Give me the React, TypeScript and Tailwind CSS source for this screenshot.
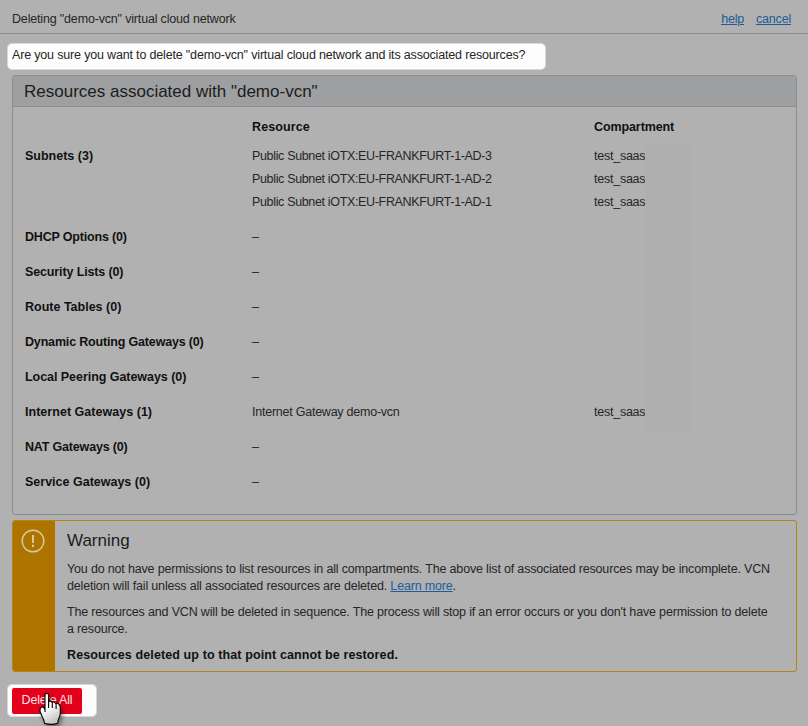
import React from "react";

type Entry = { resource: string; compartment: string };
type Group = { label: string; spacing: string; entries: Entry[] };

const groups: Group[] = [
  {
    label: "Subnets (3)",
    spacing: "tracking-[0px]",
    entries: [
      { resource: "Public Subnet iOTX:EU-FRANKFURT-1-AD-3", compartment: "test_saas" },
      { resource: "Public Subnet iOTX:EU-FRANKFURT-1-AD-2", compartment: "test_saas" },
      { resource: "Public Subnet iOTX:EU-FRANKFURT-1-AD-1", compartment: "test_saas" },
    ],
  },
  { label: "DHCP Options (0)", spacing: "tracking-[-0.18px]", entries: [] },
  { label: "Security Lists (0)", spacing: "tracking-[-0.13px]", entries: [] },
  { label: "Route Tables (0)", spacing: "tracking-[0px]", entries: [] },
  { label: "Dynamic Routing Gateways (0)", spacing: "tracking-[-0.17px]", entries: [] },
  { label: "Local Peering Gateways (0)", spacing: "tracking-[-0.05px]", entries: [] },
  {
    label: "Internet Gateways (1)",
    spacing: "tracking-[0.03px]",
    entries: [{ resource: "Internet Gateway demo-vcn", compartment: "test_saas" }],
  },
  { label: "NAT Gateways (0)", spacing: "tracking-[-0.18px]", entries: [] },
  { label: "Service Gateways (0)", spacing: "tracking-[0px]", entries: [] },
];

function GroupRow({ group }: { group: Group }) {
  const entries = group.entries.length ? group.entries : [{ resource: "–", compartment: "" }];
  const resourceSpacing = entries.length > 1 ? "tracking-[-0.34px]" : "tracking-[-0.24px]";
  return (
    <div className="flex pb-3">
      <div className={`w-[227px] font-bold leading-[23px] text-[#111111] ${group.spacing}`}>{group.label}</div>
      <div className="flex-1">
        {entries.map((entry) => (
          <div key={entry.resource} className="flex h-[23px] leading-[23px]">
            <div className={`w-[342px] ${resourceSpacing}`}>{entry.resource}</div>
            <div className="tracking-[-0.24px]">{entry.compartment}</div>
          </div>
        ))}
      </div>
    </div>
  );
}

function HandCursor() {
  return (
    <svg
      className="absolute left-[31px] top-[6px] drop-shadow-[2px_3px_2px_rgba(0,0,0,0.4)]"
      width="24"
      height="36"
      viewBox="0 0 24 36"
    >
      <defs>
        <linearGradient id="hand" x1="0" y1="0" x2="0.4" y2="1">
          <stop offset="0.5" stopColor="#ffffff" />
          <stop offset="1" stopColor="#c8c8c8" />
        </linearGradient>
      </defs>
      <path
        d="M6 18.5V4.2Q6 2.4 7.8 2.4T9.6 4.2V10.6Q11.5 9.4 13 11.3Q15 10.4 16.7 12.4Q19 11.7 20 13.4Q21.5 14.5 21.3 17.5V22Q21.3 25 19.8 27.5Q18.8 29.5 18.8 32.2Q12 34.5 5.5 32.2Q5.2 29 3 25.3L1.3 21Q0.4 17.5 2.2 16.2Q4.5 15 6 18.5Z"
        fill="url(#hand)"
        stroke="#000000"
        strokeWidth="1.1"
        strokeLinejoin="round"
      />
      <path d="M9.6 10.5V17M13.3 11.5V17M17.1 12.5V18M6 18.5V21" stroke="#000000" strokeWidth="1.1" fill="none" />
    </svg>
  );
}

export default function App() {
  return (
    <div className="h-[726px] w-[808px] overflow-hidden bg-[#b1b1b1] font-['Liberation_Sans',Arial,sans-serif] text-[12.5px] leading-[17px] tracking-[-0.17px] text-[#262626]">
      <header className="flex h-[34px] items-center justify-between border-b border-[#8d8e92] pl-3 pr-[17px] pt-[5px]">
        <div>Deleting "demo-vcn" virtual cloud network</div>
        <nav className="flex gap-3 tracking-[-0.2px] text-[#205b99] underline">
          <a>help</a>
          <a>cancel</a>
        </nav>
      </header>

      <div className="ml-[7px] mt-[9px] h-[27px] w-[539px] whitespace-nowrap rounded-[5px] border border-[#d8d8d8] bg-[#fdfdfd] pl-1 pt-[3px]">
        Are you sure you want to delete "demo-vcn" virtual cloud network and its associated resources?
      </div>

      <section className="relative ml-3 mt-[5px] h-[440px] w-[785px] rounded-[3px] border border-[#8b8d92]">
        <h2 className="flex h-[31px] items-center rounded-t-[2px] border-b border-[#8b8d92] bg-[#9e9fa0] pl-[11px] text-[17px] tracking-normal text-[#1c1c1c]">
          Resources associated with "demo-vcn"
        </h2>
        <div className="pl-3 pt-2">
          <div className="flex h-[30px] pl-[227px] font-bold leading-[25px] text-[#111111]">
            <div className="w-[342px] tracking-[0.1px]">Resource</div>
            <div className="tracking-[-0.1px]">Compartment</div>
          </div>
          {groups.map((group) => (
            <GroupRow key={group.label} group={group} />
          ))}
        </div>
        <div className="absolute left-[632px] top-[68px] h-[287px] w-[47px] rounded-[6px] bg-[#afafaf]" />
      </section>

      <section className="ml-3 mt-[5px] flex h-[152px] w-[785px] overflow-hidden rounded-[3px] border border-[#b58217]">
        <div className="w-[42px] shrink-0 bg-[#ad7500] pl-2 pt-2">
          <svg width="24" height="24" viewBox="0 0 24 24" fill="none" stroke="#d5c8a8">
            <circle cx="12" cy="12" r="10.8" strokeWidth="1.4" />
            <path d="M12 6V14M12 15.8V18" strokeWidth="2" />
          </svg>
        </div>
        <div className="flex-1 border-l border-[#b9b09c] pl-[11px]">
          <h3 className="pt-[9px] text-[17px] leading-[22px] tracking-normal text-[#1c1c1c]">Warning</h3>
          <p className="mt-[9px] whitespace-nowrap">
            You do not have permissions to list resources in all compartments. The above list of associated resources may be incomplete. VCN
            <br />
            deletion will fail unless all associated resources are deleted. <a className="text-[#205b99] underline">Learn more</a>.
          </p>
          <p className="mt-[9px] whitespace-nowrap">
            The resources and VCN will be deleted in sequence. The process will stop if an error occurs or you don't have permission to delete
            <br />a resource.
          </p>
          <p className="mt-[9px] font-bold tracking-[0.11px] text-[#111111]">Resources deleted up to that point cannot be restored.</p>
        </div>
      </section>

      <div className="relative ml-[7px] mt-3 flex h-[33px] w-[90px] items-center rounded-[5px] border border-[#d8d8d8] bg-[#fdfdfd] pl-1">
        <button className="h-[26px] w-[70px] rounded-[2px] bg-[#e3001b] tracking-[-0.2px] text-[#fbe3e6]">Delete All</button>
        <HandCursor />
      </div>
    </div>
  );
}
